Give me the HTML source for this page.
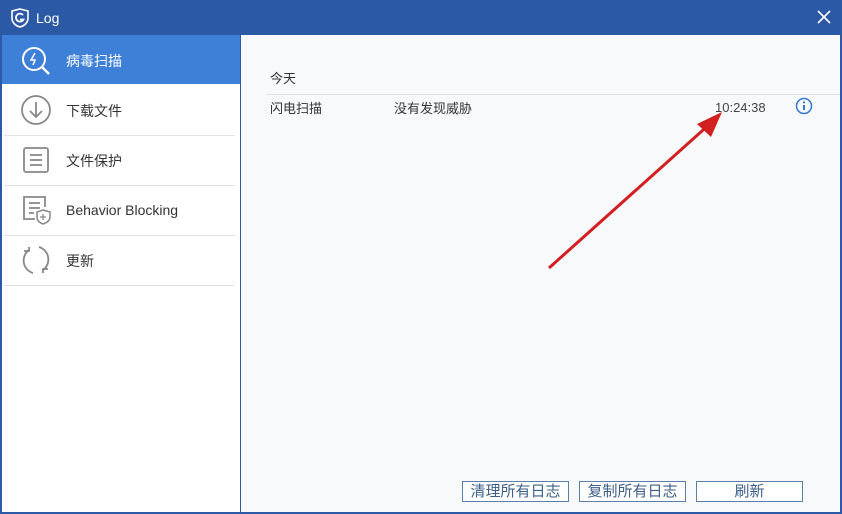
<!DOCTYPE html><html><head><style>
body{margin:0;width:842px;height:514px;overflow:hidden;font-family:"Liberation Sans","Noto Sans CJK SC",sans-serif;position:relative;background:#2d5aa6}
.t{position:absolute;font-size:14px;color:#333;white-space:nowrap}
#side{position:absolute;left:2px;top:35px;width:238px;height:477px;background:#fff}
#main{position:absolute;left:241px;top:35px;width:599px;height:477px;background:#f7f9fb}
.row{position:absolute;left:4px;width:231px;height:50px;border-bottom:1px solid #e2e2e2}
.btn{position:absolute;top:481px;height:21px;border:1px solid #5a7fa8;background:#fff;font-size:15px;color:#3d5f8a;text-align:center;line-height:20px;box-sizing:border-box}
</style></head><body>
<div style="position:absolute;left:0;top:0;width:842px;height:35px;background:#2b59a6"></div>
<svg style="position:absolute;left:10px;top:8px" width="20" height="20" viewBox="0 0 20 20"><path d="M10 1 L18 3 V10 C18 15 14 18 10 19 C6 18 2 15 2 10 V3 Z" fill="none" stroke="#fff" stroke-width="1.6"/><path d="M13 7 A4 4 0 1 0 13.5 11.5 H10" fill="none" stroke="#fff" stroke-width="1.8"/></svg>
<div class="t" style="left:36px;top:10px;color:#fff;font-size:14px">Log</div>
<svg style="position:absolute;left:817px;top:10px" width="14" height="14" viewBox="0 0 14 14"><path d="M1 1 L13 13 M13 1 L1 13" stroke="#fff" stroke-width="1.6"/></svg>
<div id="side"></div>
<div id="main"></div>
<div style="position:absolute;left:2px;top:35px;width:238px;height:49px;background:#3e7fd8"></div>
<svg style="position:absolute;left:20px;top:45px" width="32" height="32" viewBox="0 0 32 32"><circle cx="14" cy="14" r="11" fill="none" stroke="#fff" stroke-width="2"/><path d="M22 22 L29 29" stroke="#fff" stroke-width="2.5"/><path d="M15 8 L11 15 H15 L13 20" fill="none" stroke="#fff" stroke-width="1.5"/></svg>
<div class="t" style="left:66px;top:51px;color:#fff">病毒扫描</div>
<div class="row" style="top:85px"></div><div class="row" style="top:135px"></div><div class="row" style="top:185px"></div><div class="row" style="top:235px"></div>
<svg style="position:absolute;left:20px;top:94px" width="32" height="32" viewBox="0 0 32 32"><circle cx="16" cy="16" r="14" fill="none" stroke="#888" stroke-width="1.8"/><path d="M16 8 V23 M10 17 L16 23 L22 17" fill="none" stroke="#888" stroke-width="1.8"/></svg>
<div class="t" style="left:66px;top:101px">下载文件</div>
<svg style="position:absolute;left:22px;top:146px" width="28" height="28" viewBox="0 0 28 28"><rect x="2" y="2" width="24" height="24" rx="2" fill="none" stroke="#888" stroke-width="1.8"/><path d="M8 9 H20 M8 14 H20 M8 19 H20" stroke="#888" stroke-width="1.8"/></svg>
<div class="t" style="left:66px;top:151px">文件保护</div>
<svg style="position:absolute;left:21px;top:195px" width="32" height="32" viewBox="0 0 32 32"><path d="M14 24 H3 V2 H24 V12" fill="none" stroke="#888" stroke-width="1.8"/><path d="M8 8 H19 M8 13 H19 M8 18 H13" stroke="#888" stroke-width="1.8"/><path d="M22 15 L29 17 V22 C29 26 25 28 22 29 C19 28 16 26 16 22 V17 Z" fill="#fff" stroke="#888" stroke-width="1.5"/><path d="M22 19 V25 M19 22 H25" stroke="#888" stroke-width="1.3"/></svg>
<div class="t" style="left:66px;top:202px">Behavior Blocking</div>
<svg style="position:absolute;left:20px;top:244px" width="32" height="32" viewBox="0 0 32 32"><path d="M9 6 A13 13 0 0 0 13 29 M23 26 A13 13 0 0 0 19 3" fill="none" stroke="#888" stroke-width="1.8"/><path d="M9 3 V7 H4 M23 29 V25 H28" fill="none" stroke="#888" stroke-width="1.8"/></svg>
<div class="t" style="left:66px;top:251px">更新</div>
<div class="t" style="left:270px;top:68px;font-size:13px">今天</div>
<div style="position:absolute;left:266px;top:94px;width:574px;height:1px;background:#e0e0e0"></div>
<div class="t" style="left:270px;top:98px;font-size:13px">闪电扫描</div>
<div class="t" style="left:394px;top:98px;font-size:13px">没有发现威胁</div>
<div class="t" style="left:715px;top:100px;font-size:13px;color:#444">10:24:38</div>
<svg style="position:absolute;left:795px;top:97px" width="18" height="18" viewBox="0 0 18 18"><circle cx="9" cy="9" r="7.5" fill="none" stroke="#3478d0" stroke-width="1.5"/><circle cx="9" cy="5.3" r="1.1" fill="#3478d0"/><path d="M9 8 V13" stroke="#3478d0" stroke-width="2"/></svg>
<svg style="position:absolute;left:0;top:0" width="842" height="514"><path d="M549 268 L712 122" stroke="#d21f1f" stroke-width="3"/><path d="M722 112 L697 124 L711 137 Z" fill="#d21f1f"/></svg>
<div class="btn" style="left:462px;width:107px">清理所有日志</div>
<div class="btn" style="left:579px;width:107px">复制所有日志</div>
<div class="btn" style="left:696px;width:107px">刷新</div>
</body></html>
